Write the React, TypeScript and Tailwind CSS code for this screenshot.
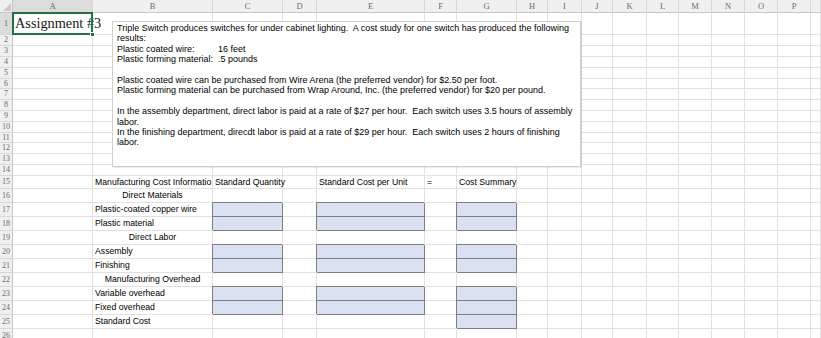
import clsx from "clsx";

// column template shared by the header and every sheet row
const GRID =
  "grid grid-cols-[13px_80px_120px_70px_34px_108px_32px_60px_31px_34px_31px_34px_32px_33px_33px_33px_33px_1fr]";

const LETTERS = ["A", "B", "C", "D", "E", "F", "G", "H", "I", "J", "K", "L", "M", "N", "O", "P", ""];

type Cell = { text?: string; center?: boolean; clip?: boolean; shaded?: boolean };

type Row = { n: number; h: string; cells: Record<number, Cell> };

const shadedRow = (label: string, g = true): Record<number, Cell> => ({
  2: { text: label },
  3: { shaded: true },
  5: { shaded: true },
  7: { shaded: g },
});

const ROWS: Row[] = [
  { n: 2, h: "h-[11px]", cells: {} },
  { n: 3, h: "h-[11px]", cells: {} },
  { n: 4, h: "h-[11px]", cells: {} },
  { n: 5, h: "h-[11px]", cells: {} },
  { n: 6, h: "h-[10px]", cells: {} },
  { n: 7, h: "h-[11px]", cells: {} },
  { n: 8, h: "h-[11px]", cells: {} },
  { n: 9, h: "h-[11px]", cells: {} },
  { n: 10, h: "h-[11px]", cells: {} },
  { n: 11, h: "h-[10px]", cells: {} },
  { n: 12, h: "h-[11px]", cells: {} },
  { n: 13, h: "h-[11px]", cells: {} },
  { n: 14, h: "h-[11px]", cells: {} },
  {
    n: 15,
    h: "h-[13px]",
    cells: {
      2: { text: "Manufacturing Cost Informatio", clip: true },
      3: { text: "Standard Quantity" },
      5: { text: "Standard Cost per Unit" },
      6: { text: "=" },
      7: { text: "Cost Summary" },
    },
  },
  { n: 16, h: "h-[14px]", cells: { 2: { text: "Direct Materials", center: true } } },
  { n: 17, h: "h-[14px]", cells: shadedRow("Plastic-coated copper wire") },
  { n: 18, h: "h-[14px]", cells: shadedRow("Plastic material") },
  { n: 19, h: "h-[14px]", cells: { 2: { text: "Direct Labor", center: true } } },
  { n: 20, h: "h-[14px]", cells: shadedRow("Assembly") },
  { n: 21, h: "h-[14px]", cells: shadedRow("Finishing") },
  { n: 22, h: "h-[14px]", cells: { 2: { text: "Manufacturing Overhead", center: true } } },
  { n: 23, h: "h-[14px]", cells: shadedRow("Variable overhead") },
  { n: 24, h: "h-[14px]", cells: shadedRow("Fixed overhead") },
  { n: 25, h: "h-[14px]", cells: { 2: { text: "Standard Cost" }, 7: { shaded: true } } },
  { n: 26, h: "h-[14px]", cells: {} },
];

const NOTE = [
  "Triple Switch produces switches for under cabinet lighting.  A cost study for one switch has produced the following",
  "results:",
];

const FACTS = [
  ["Plastic coated wire:", "16 feet"],
  ["Plastic forming material:", ".5 pounds"],
];

const NOTE_BOTTOM = [
  "Plastic coated wire can be purchased from Wire Arena (the preferred vendor) for $2.50 per foot.",
  "Plastic forming material can be purchased from Wrap Around, Inc. (the preferred vendor) for $20 per pound.",
  "",
  "In the assembly department, direct labor is paid at a rate of $27 per hour.  Each switch uses 3.5 hours of assembly",
  "labor.",
  "In the finishing department, direcdt labor is paid at a rate of $29 per hour.  Each switch uses 2 hours of finishing",
  "labor.",
];

function RowHeader({ n, selected }: { n: number; selected?: boolean }) {
  return (
    <div
      className={clsx(
        "flex items-center justify-center border-r border-b border-r-[#c6c6c6] border-b-[#d9d9d9] font-['Liberation_Serif',serif] text-[8px] leading-none",
        selected ? "bg-[#dcdcdc] text-[#4d6b57]" : "bg-[#f0f0f0] text-[#6b6b6b]"
      )}
    >
      {n}
    </div>
  );
}

function SheetCell({ cell }: { cell?: Cell }) {
  if (cell?.shaded) {
    return (
      <div className="border-r border-b border-[#7f7f7f] bg-[#d9e1f2] shadow-[-1px_-1px_0_#7f7f7f]" />
    );
  }
  return (
    <div
      className={clsx(
        "flex items-center whitespace-nowrap border-r border-b border-[#e1e1e1] px-[2px] text-[8.7px] leading-none text-black",
        cell?.center && "justify-center",
        cell?.clip ? "overflow-hidden" : "overflow-visible"
      )}
    >
      {cell?.text}
    </div>
  );
}

export default function App() {
  return (
    <div className="relative h-[338px] w-[821px] overflow-hidden bg-white font-['Liberation_Sans',Arial,sans-serif]">
      {/* column letters */}
      <div className={clsx(GRID, "h-[13px] bg-[#f0f0f0]")}>
        <div className="relative border-r border-b border-[#c6c6c6]">
          <div className="absolute right-[1px] bottom-[1px] h-0 w-0 border-l-[8px] border-t-[8px] border-l-transparent border-t-transparent border-b-0 border-r-[8px] border-r-[#c9c9c9] [border-bottom-style:solid]" />
        </div>
        {LETTERS.map((l, i) => (
          <div
            key={i}
            className={clsx(
              "flex items-center justify-center border-r border-b border-r-[#d9d9d9] font-['Liberation_Serif',serif] text-[8.5px] leading-none",
              i === 0
                ? "border-b-[#217346] bg-[#dcdcdc] text-[#4d6b57]"
                : "border-b-[#c6c6c6] text-[#6b6b6b]"
            )}
          >
            {l}
          </div>
        ))}
      </div>

      {/* row 1 */}
      <div className={clsx(GRID, "h-[22px]")}>
        <RowHeader n={1} selected />
        <div className="relative flex items-center border-r border-b border-[#e1e1e1] pl-[2px] whitespace-nowrap font-['Liberation_Serif',serif] text-[14.3px] leading-none text-[#1a1a1a]">
          Assignment #3
          <div className="pointer-events-none absolute -top-px -left-px h-[23px] w-[81px] border-2 border-[#217346]" />
          <div className="absolute -right-[3px] -bottom-[3px] h-[5px] w-[5px] border border-white bg-[#217346]" />
        </div>
        {LETTERS.slice(1).map((_, i) => (
          <SheetCell key={i} />
        ))}
      </div>

      {ROWS.map((row) => (
        <div key={row.n} className={clsx(GRID, row.h)}>
          <RowHeader n={row.n} />
          {LETTERS.map((_, i) => (
            <SheetCell key={i} cell={row.cells[i + 1]} />
          ))}
        </div>
      ))}

      {/* floating text box */}
      <div className="absolute top-[21px] left-[112px] h-[146px] w-[469px] border border-[#cfcfcf] bg-white px-[4px] pt-[1px] text-[9px] leading-[10.4px] text-black shadow-[1px_1px_1px_rgba(0,0,0,0.08)]">
        {NOTE.map((t, i) => (
          <div key={i} className="h-[10.4px] whitespace-pre">
            {t}
          </div>
        ))}
        {FACTS.map(([label, value]) => (
          <div key={label} className="flex h-[10.4px] whitespace-nowrap">
            <span className="w-[101px] shrink-0">{label}</span>
            <span>{value}</span>
          </div>
        ))}
        <div className="h-[10.4px]" />
        {NOTE_BOTTOM.map((t, i) => (
          <div key={i} className="h-[10.4px] whitespace-pre">
            {t}
          </div>
        ))}
      </div>
    </div>
  );
}
